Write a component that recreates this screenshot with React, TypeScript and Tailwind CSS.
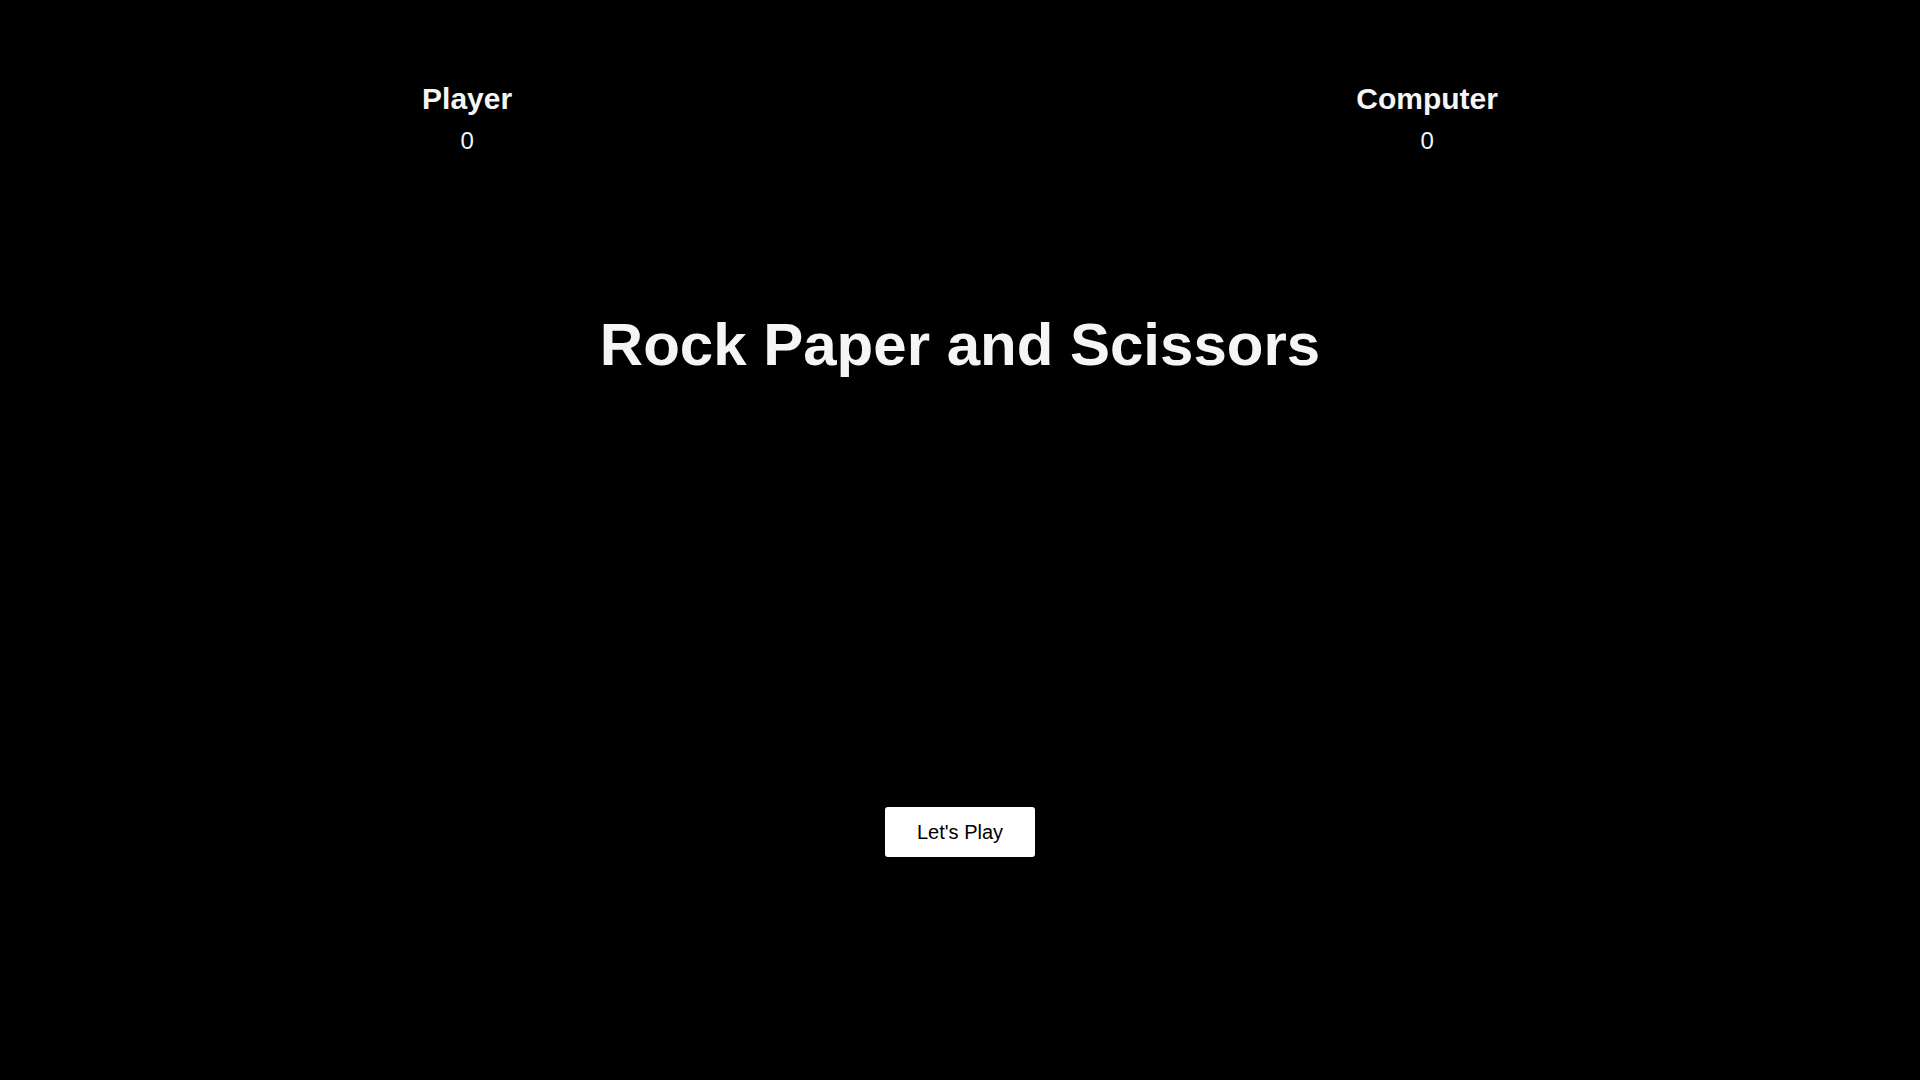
import { useState } from 'react';

interface ScoreProps {
  label: string;
  score: number;
}

function Score({ label, score }: ScoreProps) {
  return (
    <div className="flex flex-col items-center">
      <h2 className="text-3xl font-bold text-[#f5f5f5]">{label}</h2>
      <p className="mt-2 text-2xl text-[#f5f5f5]">{score}</p>
    </div>
  );
}

export default function App() {
  const [playerScore] = useState(0);
  const [computerScore] = useState(0);

  return (
    <div
      className="min-h-screen w-full bg-black flex flex-col items-center"
      style={{ fontFamily: '"Liberation Sans", Arial, sans-serif' }}
    >
      <div className="w-full flex justify-around pt-[81px]">
        <Score label="Player" score={playerScore} />
        <Score label="Computer" score={computerScore} />
      </div>

      <h1 className="mt-[158px] text-6xl font-bold text-[#f5f5f5]">
        Rock Paper and Scissors
      </h1>

      <button className="mt-[432px] rounded-[3px] bg-white px-8 py-[11px] text-xl text-black">
        Let's Play
      </button>
    </div>
  );
}
